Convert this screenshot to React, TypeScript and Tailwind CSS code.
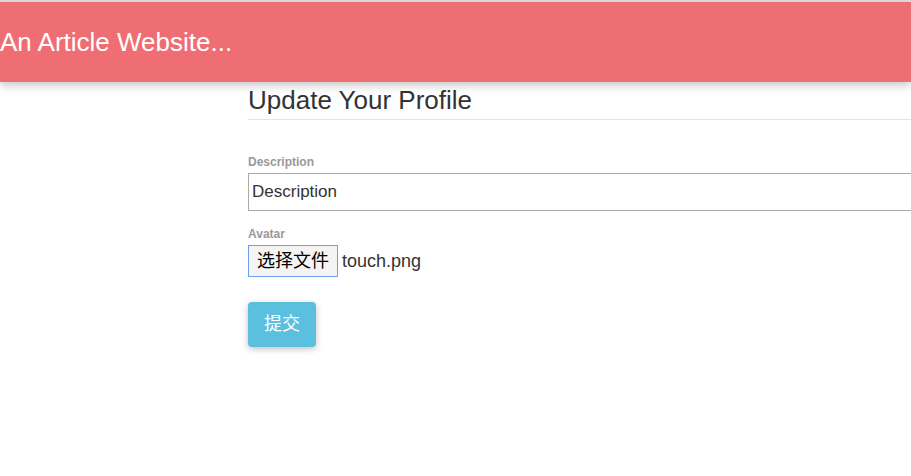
export default function App() {
  return (
    <div className="min-h-[476px] w-[911px] overflow-hidden bg-white font-['Liberation_Sans','Noto_Sans_CJK_SC',sans-serif] text-[#333]">
      <div className="h-[2px] bg-[#dcdcdc]" />
      {/* 顶栏 */}
      <header className="relative z-10 flex h-[80px] items-center bg-[#ef6e73] shadow-[0_4px_8px_rgba(0,0,0,0.2)]">
        <h1 className="text-[26px] leading-none text-white">An Article Website...</h1>
      </header>

      <main className="ml-[248px] w-[800px]">
        <h2 className="border-b border-[#e5e5e5] pb-[6px] pt-[5px] text-[26px] leading-[26px] text-[#333]">
          Update Your Profile
        </h2>

        <form className="mt-[35px]">
          <label className="block text-[12px] font-bold leading-[14px] text-[#999]">Description</label>
          <input
            type="text"
            placeholder="Description"
            className="mt-[4px] block h-[38px] w-full border border-[#a9a9a9] px-[3px] text-[17px] text-[#333] placeholder:text-[#333]"
          />

          <label className="mt-[16px] block text-[12px] font-bold leading-[14px] text-[#999]">Avatar</label>
          <div className="mt-[4px] flex items-center">
            <span className="flex h-[32px] w-[90px] items-center justify-center border border-[#6b9ef0] bg-[#f4f4f4] text-[18px] text-black">
              选择文件
            </span>
            <span className="ml-[4px] text-[18px] text-[#333]">touch.png</span>
          </div>

          <button
            type="button"
            className="mt-[25px] flex h-[45px] w-[68px] items-center justify-center rounded-[4px] bg-[#5bc0de] text-[18px] text-white shadow-[0_2px_6px_rgba(0,0,0,0.25)]"
          >
            提交
          </button>
        </form>
      </main>
    </div>
  );
}
